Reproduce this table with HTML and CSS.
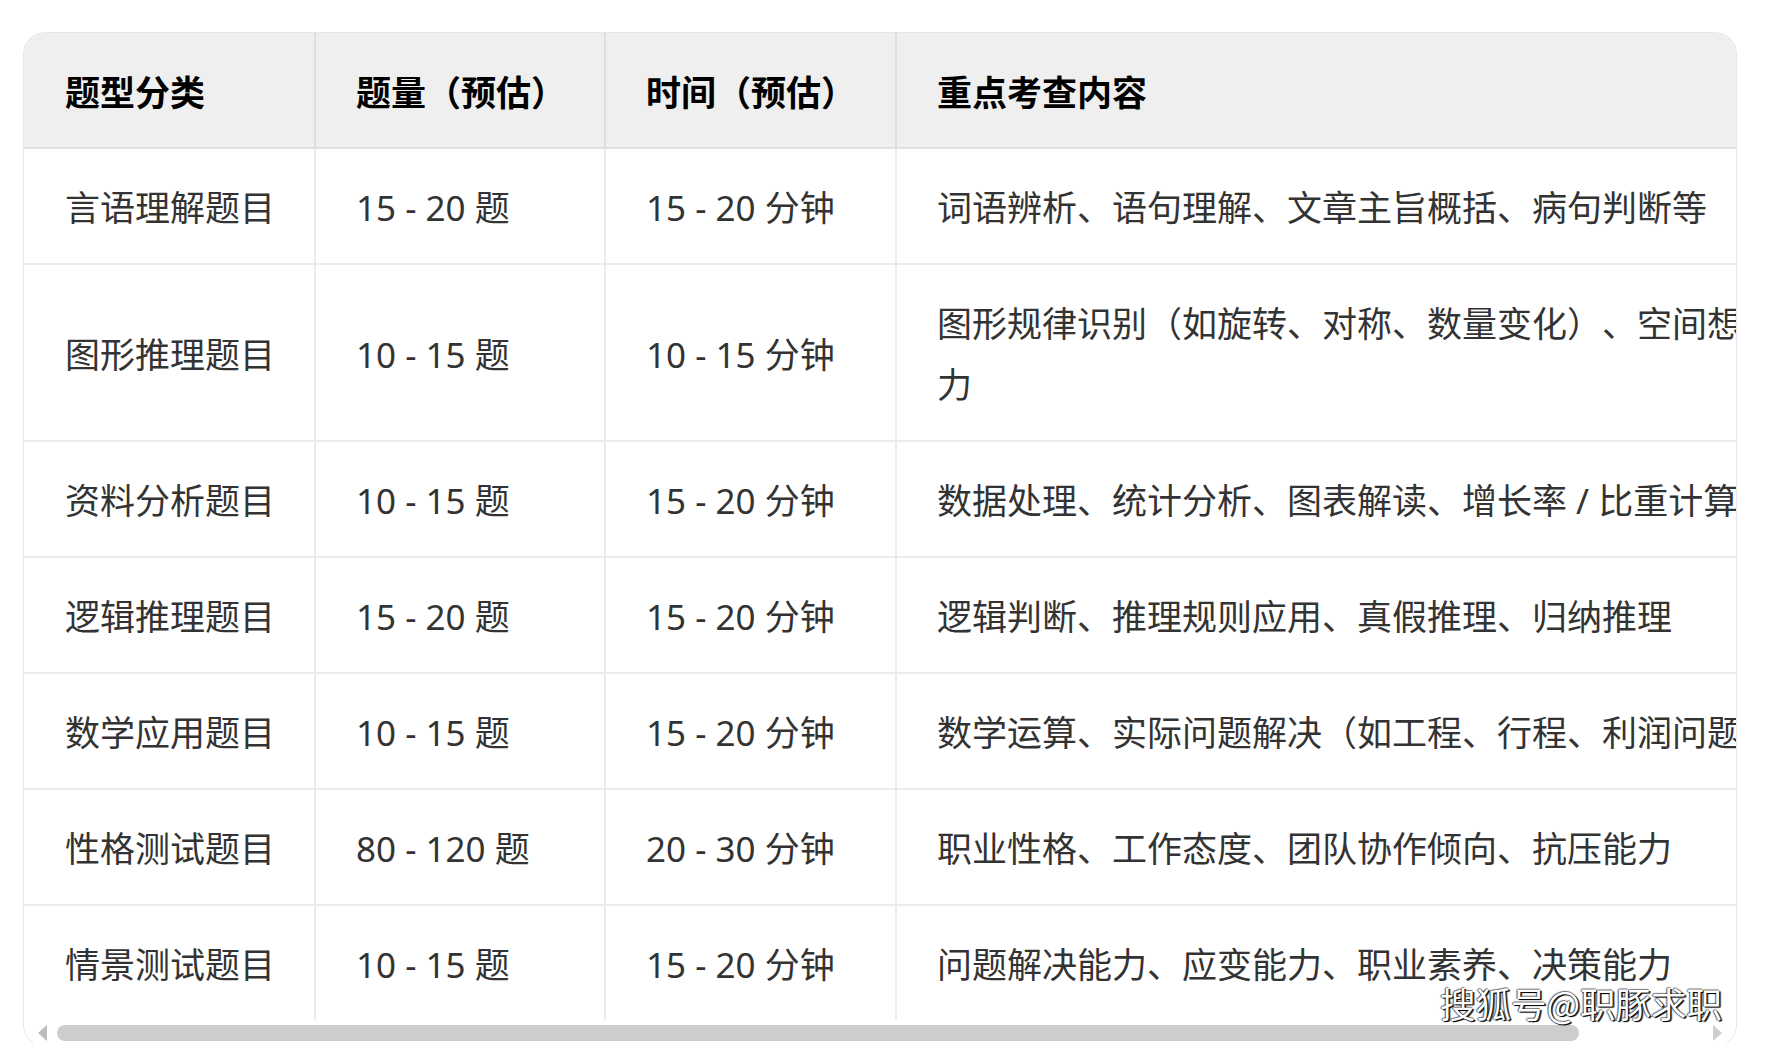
FILE: index.html
```html
<!DOCTYPE html>
<html lang="zh-CN">
<head>
<meta charset="utf-8">
<title>题型分类</title>
<link rel="stylesheet" href="styles.css">
</head>
<body>
<div class="page">
  <div class="card">
    <div class="scroller">
      <table class="grid">
        <colgroup>
          <col class="c1"><col class="c2"><col class="c3"><col class="c4">
        </colgroup>
        <thead>
          <tr><th>题型分类</th><th>题量（预估）</th><th>时间（预估）</th><th class="wide">重点考查内容</th></tr>
        </thead>
        <tbody>
          <tr><td>言语理解题目</td><td>15 - 20 题</td><td>15 - 20 分钟</td><td class="wide">词语辨析、语句理解、文章主旨概括、病句判断等</td></tr>
          <tr><td>图形推理题目</td><td>10 - 15 题</td><td>10 - 15 分钟</td><td class="wide">图形规律识别（如旋转、对称、数量变化）、空间想象能力</td></tr>
          <tr><td>资料分析题目</td><td>10 - 15 题</td><td>15 - 20 分钟</td><td class="wide">数据处理、统计分析、图表解读、增长率 / 比重计算</td></tr>
          <tr><td>逻辑推理题目</td><td>15 - 20 题</td><td>15 - 20 分钟</td><td class="wide">逻辑判断、推理规则应用、真假推理、归纳推理</td></tr>
          <tr><td>数学应用题目</td><td>10 - 15 题</td><td>15 - 20 分钟</td><td class="wide">数学运算、实际问题解决（如工程、行程、利润问题等）</td></tr>
          <tr><td>性格测试题目</td><td>80 - 120 题</td><td>20 - 30 分钟</td><td class="wide">职业性格、工作态度、团队协作倾向、抗压能力</td></tr>
          <tr><td>情景测试题目</td><td>10 - 15 题</td><td>15 - 20 分钟</td><td class="wide">问题解决能力、应变能力、职业素养、决策能力</td></tr>
        </tbody>
      </table>
    </div>
    <div class="track">
      <span class="btn"><span class="arrow-left"></span></span>
      <span class="thumb"></span>
      <span class="fill"></span>
      <span class="btn"><span class="arrow-right"></span></span>
    </div>
    <div class="watermark">搜狐号@职豚求职</div>
  </div>
</div>
</body>
</html>
```

FILE: styles.css
```css
html, body {
  margin: 0;
  padding: 0;
  background: #ffffff;
}

body {
  font-family: "Noto Sans", "Noto Sans CJK SC", sans-serif;
  color: #333333;
  overflow: hidden;
  text-spacing-trim: space-all;
}

.page {
  padding: 32px 29px 0 23px;
}

.card {
  position: relative;
  border: 1px solid #e6e6e6;
  border-radius: 22px;
  overflow: hidden;
  background: #ffffff;
}

.scroller {
  overflow: hidden;
}

.grid {
  border-collapse: separate;
  border-spacing: 0;
  table-layout: fixed;
  width: 1842px;
}

.c1 { width: 292px; }
.c2 { width: 290px; }
.c3 { width: 291px; }
.c4 { width: 969px; }

.grid th,
.grid td {
  text-align: left;
  vertical-align: middle;
  font-size: 35px;
  line-height: 61px;
  padding: 28px 0 25px 40px;
  border-right: 2px solid #ececec;
  border-bottom: 2px solid #ececec;
  white-space: nowrap;
  text-spacing-trim: space-all;
}

.grid th {
  background: #efefef;
  color: #000000;
  font-weight: 700;
  border-right-color: #dedede;
  border-bottom-color: #e0e0e0;
  padding-top: 29px;
  padding-bottom: 24px;
}

.grid .wide {
  white-space: normal;
  word-break: break-all;
  padding-right: 40px;
}

.grid td:first-child,
.grid th:first-child {
  padding-left: 41px;
}

.grid tbody tr:last-child td {
  border-bottom: none;
}

.track {
  display: flex;
  align-items: center;
  height: 26px;
}

.btn {
  display: flex;
  align-items: center;
  justify-content: center;
  width: 33px;
  height: 16px;
}

.arrow-left {
  width: 0;
  height: 0;
  border-top: 8px solid transparent;
  border-bottom: 8px solid transparent;
  border-right: 9px solid #bcbcbc;
  margin-left: 4px;
}

.arrow-right {
  width: 0;
  height: 0;
  border-top: 8px solid transparent;
  border-bottom: 8px solid transparent;
  border-left: 9px solid #cdcdcd;
  margin-right: 4px;
}

.thumb {
  width: 1522px;
  height: 16px;
  border-radius: 8px;
  background: #cdcdcd;
}

.fill {
  flex: 1;
}

.watermark {
  position: absolute;
  right: 14px;
  bottom: 26px;
  font-family: "Noto Sans CJK SC", sans-serif;
  font-size: 35.5px;
  line-height: 1;
  color: #ffffff;
  text-shadow: 1px 1px 1px #000000, 2px 1px 0 rgba(0, 0, 0, 0.6), -1px 0 1px rgba(0, 0, 0, 0.6), 0 -1px 1px rgba(0, 0, 0, 0.5);
}
```
